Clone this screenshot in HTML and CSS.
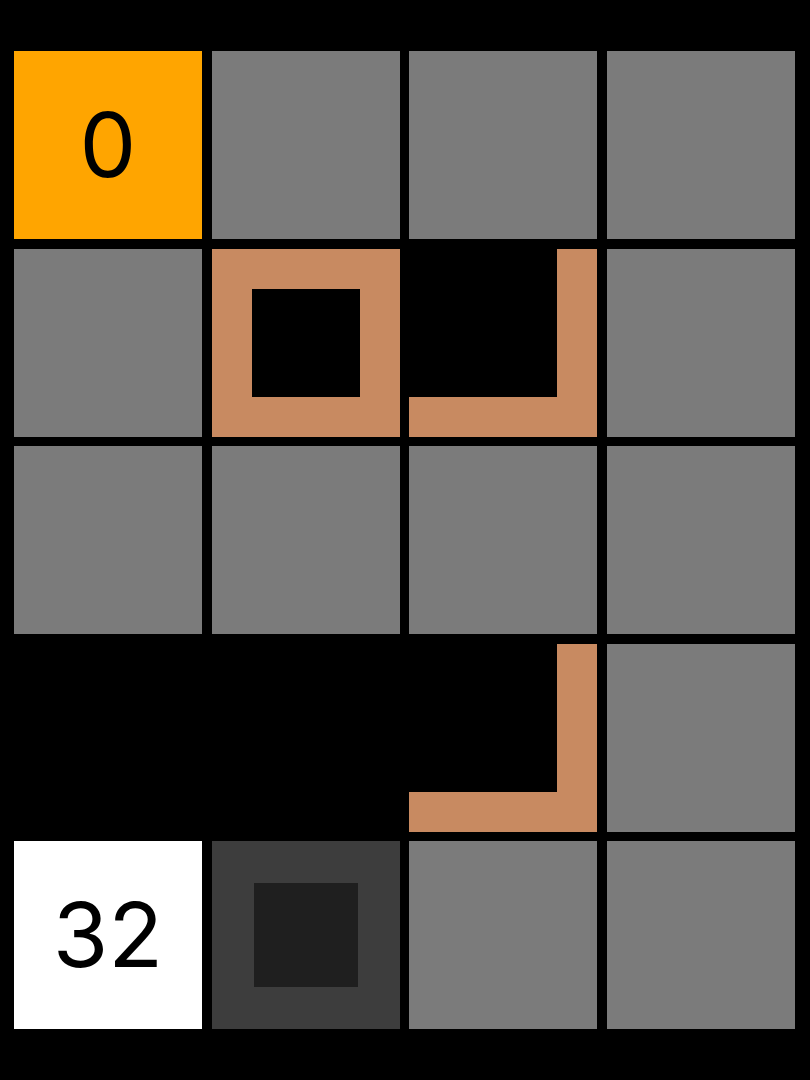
FILE: index.html
```html
<!DOCTYPE html>
<html lang="en">
<head>
    <meta charset="UTF-8">
    <meta name="viewport" content="width=device-width, initial-scale=1.0">
    <title>Tiles</title>
    <link rel="stylesheet" href="styles.css">
</head>
<body>
    <div class="board">
        <!-- Row 1 -->
        <div class="tile tile-start">0</div>
        <div class="tile tile-gray"></div>
        <div class="tile tile-gray"></div>
        <div class="tile tile-gray"></div>

        <!-- Row 2 -->
        <div class="tile tile-gray"></div>
        <div class="tile tile-ring"></div>
        <div class="tile tile-corner"></div>
        <div class="tile tile-gray"></div>

        <!-- Row 3 -->
        <div class="tile tile-gray"></div>
        <div class="tile tile-gray"></div>
        <div class="tile tile-gray"></div>
        <div class="tile tile-gray"></div>

        <!-- Row 4 -->
        <div class="tile tile-empty"></div>
        <div class="tile tile-empty"></div>
        <div class="tile tile-corner"></div>
        <div class="tile tile-gray"></div>

        <!-- Row 5 -->
        <div class="tile tile-score">32</div>
        <div class="tile tile-dark"><div class="tile-inner"></div></div>
        <div class="tile tile-gray"></div>
        <div class="tile tile-gray"></div>
    </div>
</body>
</html>
```

FILE: styles.css
```css
* {
    margin: 0;
    padding: 0;
    box-sizing: border-box;
}

body {
    font-family: Inter, Roboto, sans-serif;
    background: #000;
    width: 810px;
    height: 1080px;
    padding: 51px 14px;
}

.board {
    display: grid;
    grid-template-columns: repeat(4, 188px);
    grid-template-rows: repeat(5, 188px);
    gap: 9.5px;
}

.tile {
    display: flex;
    align-items: center;
    justify-content: center;
    font-size: 90px;
    font-weight: 400;
    line-height: 1;
    color: #000;
}

.tile-gray {
    background: #7b7b7b;
}

.tile-start {
    background: #ffa500;
}

.tile-score {
    background: #fff;
}

.tile-empty {
    background: #000;
}

.tile-ring {
    background: #000;
    border: 40px solid #c88a61;
}

.tile-corner {
    background: #000;
    border-right: 40px solid #c88a61;
    border-bottom: 40px solid #c88a61;
}

.tile-dark {
    background: #3d3d3d;
}

.tile-inner {
    width: 104px;
    height: 104px;
    background: #1f1f1f;
}
```
